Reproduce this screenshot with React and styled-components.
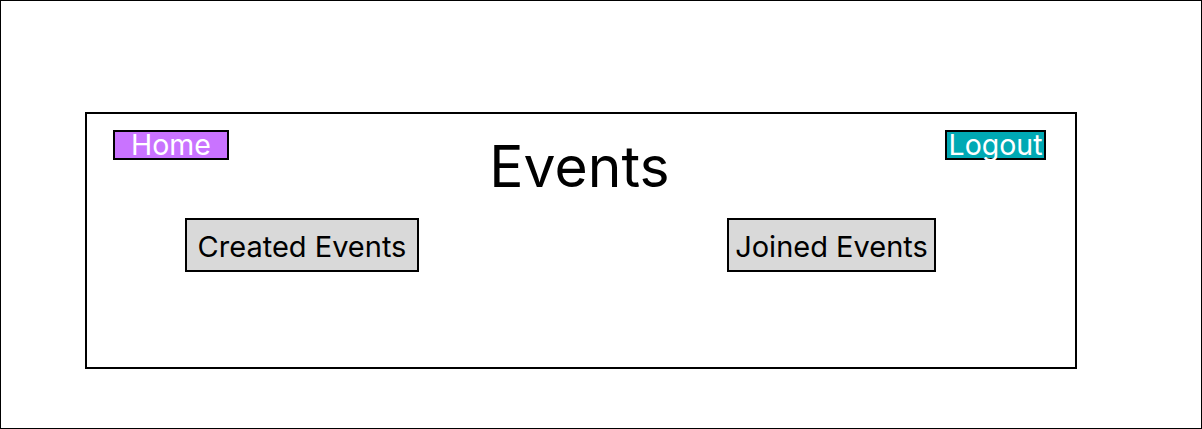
import React from "react";
import styled, { createGlobalStyle } from "styled-components";

const GlobalStyle = createGlobalStyle`
  html, body { margin: 0; padding: 0; background: #ffffff; }
  * { box-sizing: border-box; }
  body { font-family: Inter, "Liberation Sans", sans-serif; }
`;

const Page = styled.div`
  width: 1202px;
  height: 429px;
  border: 1px solid #000;
  padding: 111px 0 0 84px;
  background: #fff;
`;

const Panel = styled.section`
  width: 992px;
  height: 257px;
  border: 2px solid #000;
  padding: 16px 29px 0 26px;
  display: flex;
  flex-direction: column;
`;

const Header = styled.header`
  display: grid;
  grid-template-columns: 1fr auto 1fr;
  align-items: start;
`;

const NavButton = styled.button`
  justify-self: ${(p) => (p.$end ? "end" : "start")};
  height: 30px;
  padding: 0 ${(p) => p.$pad}px;
  border: 2px solid #000;
  border-radius: 0;
  background: ${(p) => p.$bg};
  color: #fff;
  font-family: Inter, "Liberation Sans", sans-serif;
  font-size: 28.5px;
  font-weight: 400;
  line-height: 26px;
  cursor: pointer;
  white-space: nowrap;
`;

const Title = styled.h1`
  margin: 8px 0 0;
  font-family: Inter, "Liberation Sans", sans-serif;
  font-size: 57px;
  font-weight: 400;
  line-height: 1;
  color: #000;
  text-align: center;
`;

const Actions = styled.div`
  display: flex;
  align-items: flex-start;
  gap: 308px;
  margin: 23px 0 0 72px;
`;

const ActionButton = styled.button`
  width: ${(p) => p.$w}px;
  height: 54px;
  padding: 4px 0 0;
  border: 2px solid #000;
  border-radius: 0;
  background: #d9d9d9;
  color: #000;
  font-family: Inter, "Liberation Sans", sans-serif;
  font-size: 29px;
  font-weight: 400;
  line-height: 46px;
  text-align: center;
  white-space: nowrap;
  cursor: pointer;
`;

export default function App() {
  return (
    <>
      <GlobalStyle />
      <Page>
        <Panel>
          <Header>
            <NavButton $bg="#c973ff" $pad={16}>Home</NavButton>
            <Title>Events</Title>
            <NavButton $bg="#00a9b4" $pad={1.5} $end>Logout</NavButton>
          </Header>
          <Actions>
            <ActionButton $w={234}>Created Events</ActionButton>
            <ActionButton $w={209}>Joined Events</ActionButton>
          </Actions>
        </Panel>
      </Page>
    </>
  );
}
